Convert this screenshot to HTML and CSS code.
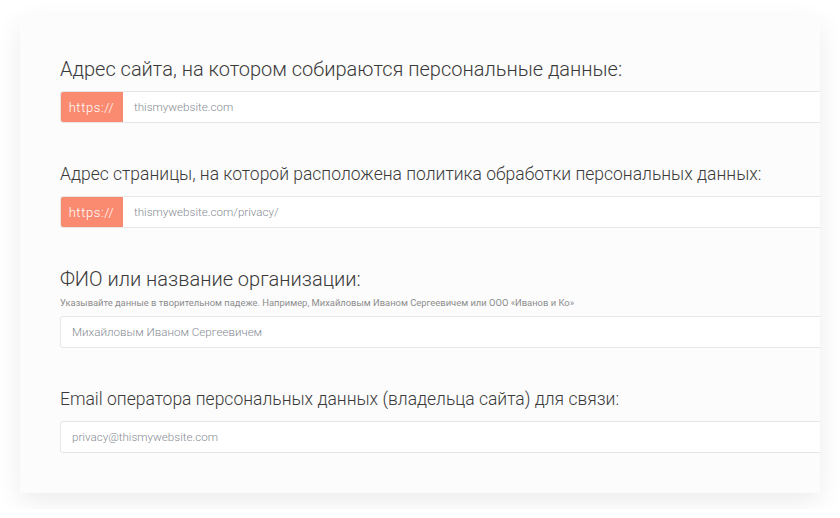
FILE: index.html
```html
<!DOCTYPE html>
<html lang="ru">

<head>
    <meta charset="UTF-8">
    <meta name="viewport" content="width=device-width, initial-scale=1.0">
    <title>Политика конфиденциальности</title>
    <link rel="stylesheet" href="styles.css">
</head>

<body>
    <div class="card">
        <div class="field">
            <label class="field-label">Адрес сайта, на котором собираются персональные данные:</label>
            <div class="input-group">
                <span class="prefix">https://</span>
                <input class="input" type="text" value="thismywebsite.com">
            </div>
        </div>

        <div class="field">
            <label class="field-label field-label-long">Адрес страницы, на которой расположена политика обработки персональных данных:</label>
            <div class="input-group">
                <span class="prefix">https://</span>
                <input class="input" type="text" value="thismywebsite.com/privacy/">
            </div>
        </div>

        <div class="field">
            <label class="field-label">ФИО или название организации:</label>
            <div class="hint">Указывайте данные в творительном падеже. Например, Михайловым Иваном Сергеевичем или ООО «Иванов и Ко»</div>
            <div class="input-group">
                <input class="input" type="text" value="Михайловым Иваном Сергеевичем">
            </div>
        </div>

        <div class="field">
            <label class="field-label field-label-long">Email оператора персональных данных (владельца сайта) для связи:</label>
            <div class="input-group">
                <input class="input" type="text" value="privacy@thismywebsite.com">
            </div>
        </div>
    </div>
</body>

</html>
```

FILE: styles.css
```css
* {
    margin: 0;
    padding: 0;
    box-sizing: border-box;
}

body {
    background: #fff;
    font-family: 'Roboto', 'Noto Sans', sans-serif;
    color: #333;
    padding: 16px 20px;
}

.card {
    width: 800px;
    height: 477px;
    background: #fcfcfc;
    box-shadow: 0 8px 24px rgba(0, 0, 0, 0.08);
    padding: 41px 0 40px 40px;
    overflow: hidden;
}

.field {
    margin-bottom: 39px;
}

.field-label {
    display: block;
    font-size: 20px;
    font-weight: 300;
    line-height: 24px;
    color: #3a3a3a;
    margin-bottom: 10px;
    white-space: nowrap;
}

/* длинные подписи в макете набраны мельче */
.field-label-long {
    font-size: 17.5px;
}

.hint {
    font-size: 9.4px;
    line-height: 12px;
    color: #8c8c8c;
    margin: -4px 0 7px;
    white-space: nowrap;
}

.input-group {
    display: flex;
    height: 32px;
    width: calc(100% + 10px);
    border: 1px solid #e6e6e6;
    border-radius: 3px;
    background: #fff;
    overflow: hidden;
}

.prefix {
    flex: 0 0 63px;
    background: #fa8a70;
    color: #fff;
    font-size: 13px;
    font-weight: 300;
    letter-spacing: 0.6px;
    display: flex;
    align-items: center;
    justify-content: center;
    margin: -1px 0 -1px -1px;
}

.input {
    flex: 1;
    border: none;
    outline: none;
    background: transparent;
    padding: 0 11px;
    font-family: inherit;
    font-size: 11.6px;
    font-weight: 300;
    color: #868b93;
}
```
